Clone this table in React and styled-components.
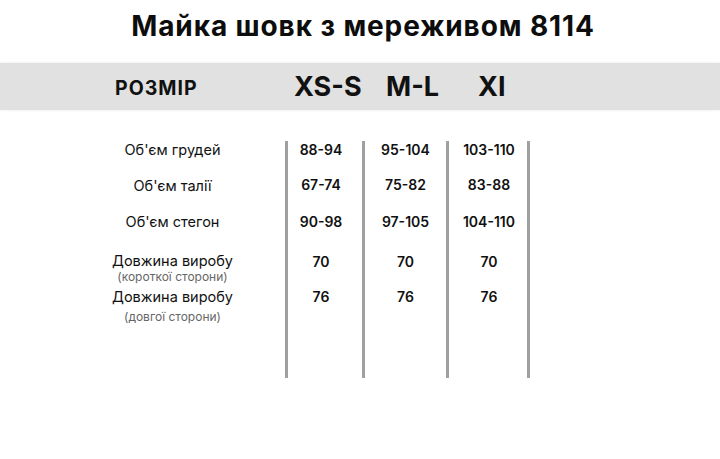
import React from "react";
import styled, { createGlobalStyle } from "styled-components";

const Global = createGlobalStyle`
  html, body { margin: 0; padding: 0; background: #ffffff; }
  body { font-family: Inter, "Noto Sans", "DejaVu Sans", sans-serif; color: #111; }
`;

const Page = styled.div`
  width: 720px;
  height: 459px;
  display: flex;
  flex-direction: column;
  background: #fff;
  overflow: hidden;
`;

const Title = styled.h1`
  margin: 0;
  padding-top: 9px;
  padding-left: 6px;
  height: 63px;
  box-sizing: border-box;
  text-align: center;
  font-size: 28px;
  line-height: 34px;
  font-weight: 700;
  letter-spacing: 0.9px;
  color: #0d0d0d;
`;

const Band = styled.div`
  height: 47px;
  background: #e1e1e1;
  box-shadow: 0 -1px 2px rgba(0,0,0,0.05), 0 1px 2px rgba(0,0,0,0.05);
  display: grid;
  grid-template-columns: 285px 77px 84px 84px;
  align-items: center;
`;

const BandLabel = styled.div`
  padding-left: 115px;
  font-size: 19.5px;
  font-weight: 700;
  letter-spacing: 1px;
  padding-top: 2px;
`;

const SizeHead = styled.div`
  padding-left: ${p => p.$offset}px;
  font-size: 27px;
  font-weight: 700;
  white-space: nowrap;
`;

const Table = styled.div`
  margin-top: 31px;
  display: grid;
  grid-template-columns: 285px 77px 84px 84px;
  grid-template-rows: 35px 37px 39px 36px 90px;
`;

const Label = styled.div`
  margin-left: 60px;
  text-align: center;
  font-size: 14.5px;
  line-height: 18px;
  font-weight: 400;
  color: #111;
  padding-top: ${p => p.$dy || 0}px;
`;

const Sub = styled.div`
  font-size: 12px;
  line-height: 14px;
  font-weight: 400;
  color: #666;
  margin-top: ${p => p.$gap || 0}px;
`;

const Cell = styled.div`
  border-left: 3px solid #a0a0a0;
  border-right: ${p => (p.$last ? "3px solid #a0a0a0" : "none")};
  text-align: center;
  font-size: 14px;
  line-height: 18px;
  font-weight: 600;
  padding-top: ${p => p.$dy || 0}px;
  padding-right: ${p => p.$pr || 0}px;
  padding-left: ${p => p.$pl || 0}px;
  white-space: nowrap;
`;

const rows = [
  { label: "Об'єм грудей", values: ["88-94", "95-104", "103-110"], dy: 0, vdy: 0 },
  { label: "Об'єм талії", values: ["67-74", "75-82", "83-88"], dy: 1, vdy: -2 },
  { label: "Об'єм стегон", values: ["90-98", "97-105", "104-110"], dy: 0, vdy: 0 },
  { label: "Довжина виробу", sub: "(короткої сторони)", values: ["70", "70", "70"], dy: 0, vdy: 1 },
  { label: "Довжина виробу", sub: "(довгої сторони)", gap: 4, values: ["76", "76", "76"], dy: 0, vdy: 0 },
];

const pads = [
  { pr: 8, pl: 0 },
  { pr: 0, pl: 0 },
  { pr: 0, pl: 2 },
];

export default function App() {
  return (
    <Page>
      <Global />
      <Title>Майка шовк з мереживом 8114</Title>
      <Band>
        <BandLabel>РОЗМІР</BandLabel>
        <SizeHead $offset={9}>XS-S</SizeHead>
        <SizeHead $offset={24}>M-L</SizeHead>
        <SizeHead $offset={32}>XI</SizeHead>
      </Band>
      <Table>
        {rows.map((r, i) => (
          <React.Fragment key={i}>
            <Label $dy={r.dy}>
              {r.label}
              {r.sub && <Sub $gap={r.gap}>{r.sub}</Sub>}
            </Label>
            {r.values.map((v, j) => (
              <Cell key={j} $last={j === 2} $dy={r.vdy} $pr={pads[j].pr} $pl={pads[j].pl}>
                {v}
              </Cell>
            ))}
          </React.Fragment>
        ))}
      </Table>
    </Page>
  );
}
